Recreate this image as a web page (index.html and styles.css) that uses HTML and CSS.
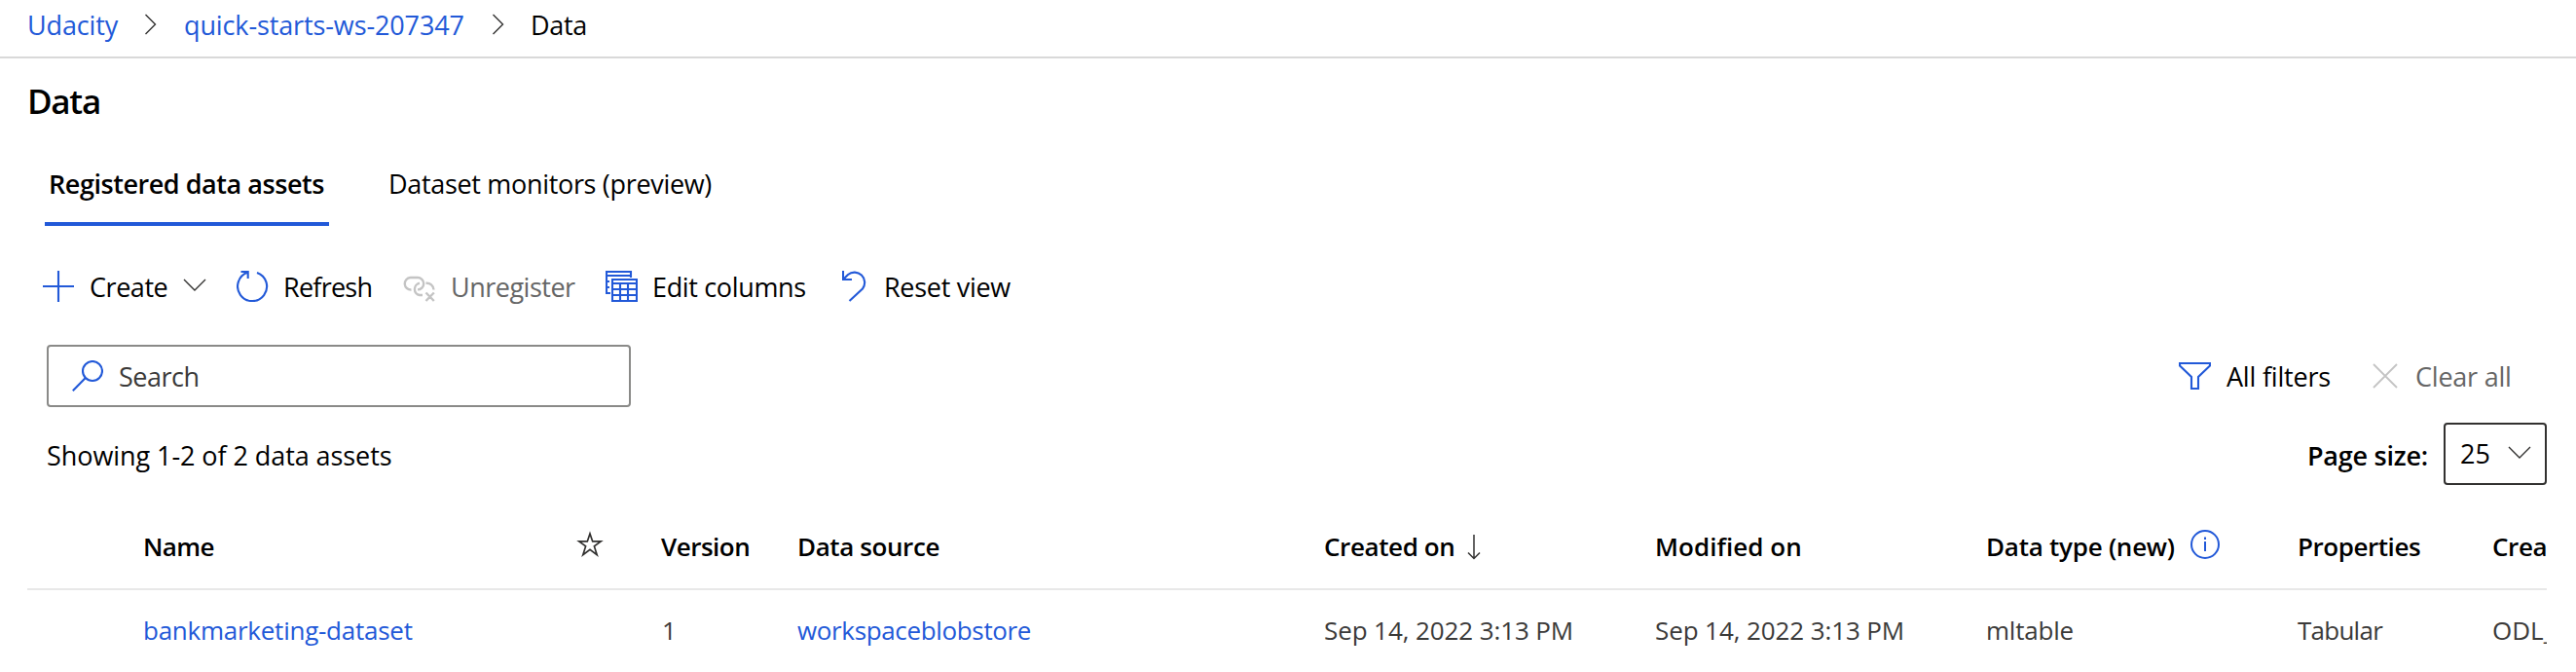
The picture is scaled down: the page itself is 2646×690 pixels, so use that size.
FILE: index.html
```
<!DOCTYPE html>
<html lang="en">
<head>
<meta charset="utf-8">
<title>Data</title>
<link rel="stylesheet" href="styles.css">
</head>
<body>
<nav class="crumbs">
  <a class="link crumb-org">Udacity</a>
  <svg class="crumb-sep" width="14" height="22" viewBox="0 0 14 22"><path d="M1.500 1L11.500 11L1.500 21"/></svg>
  <a class="link crumb-ws">quick-starts-ws-207347</a>
  <svg class="crumb-sep" width="14" height="22" viewBox="0 0 14 22"><path d="M1.500 1L11.500 11L1.500 21"/></svg>
  <span class="crumb-current">Data</span>
</nav>
<h1 class="title">Data</h1>
<div class="tabs">
  <div class="tab tab-active">Registered data assets</div>
  <div class="tab tab-monitors">Dataset monitors (preview)</div>
</div>
<div class="toolbar">
  <div class="cmd cmd-create">
    <svg class="icon blue" width="32" height="32" viewBox="0 0 32 32"><path d="M16 0V32M0 16H32"/></svg>
    <span class="label">Create</span>
    <svg class="chevron" width="24" height="14" viewBox="0 0 24 14"><path d="M1 1L12 12L23 1"/></svg>
  </div>
  <div class="cmd cmd-refresh">
    <svg class="icon blue" width="34" height="32" viewBox="0 0 34 32"><path d="M4.500 1H11.700V8M11.500 1.800A15 15 0 1 0 21 1.900"/></svg>
    <span class="label">Refresh</span>
  </div>
  <div class="cmd cmd-unregister">
    <svg class="icon gray" width="34" height="32" viewBox="0 0 34 32"><path d="M8.500 19.500A6 6 0 0 1 7.500 7H15A6.200 6.200 0 0 1 15 19.400M20 25H17A6.200 6.200 0 0 1 17 12.800M23.500 12.800A7 7 0 0 1 31.500 19.600M23.500 22.500L31.800 31M31.800 22.500L23.500 31"/></svg>
    <span class="label">Unregister</span>
  </div>
  <div class="cmd cmd-columns">
    <svg class="icon blue" width="33" height="32" viewBox="0 0 33 32"><path d="M5 23H1V1H26V7M1 5H26M1 11H4M1 17H4M7 9H32V31H7ZM7 13H32M7 19H32M7 25H32M15 13V31M23 13V31"/></svg>
    <span class="label">Edit columns</span>
  </div>
  <div class="cmd cmd-reset">
    <svg class="icon blue" width="26" height="32" viewBox="0 0 26 32"><path d="M1 0V9H10M1.500 8.500L6 4A10.500 10.500 0 0 1 21 18.500L7.500 31"/></svg>
    <span class="label">Reset view</span>
  </div>
</div>
<div class="filters">
  <div class="search">
    <svg class="icon blue" width="32" height="32" viewBox="0 0 32 32"><circle cx="21" cy="11" r="10"/><path d="M13.800 18L.8 31.200"/></svg>
    <span class="placeholder">Search</span>
  </div>
  <div class="filter-actions">
    <svg class="icon blue" width="33" height="28" viewBox="0 0 33 28"><path d="M1 1H32V3.500L20 15V27H13V15L1 3.500Z"/></svg>
    <span class="all-filters">All filters</span>
    <svg class="icon gray thin" width="26" height="26" viewBox="0 0 26 26"><path d="M1 1L25 25M25 1L1 25"/></svg>
    <span class="clear-all">Clear all</span>
  </div>
</div>
<div class="summary">
  <span class="count">Showing 1-2 of 2 data assets</span>
  <div class="pager">
    <span class="page-label">Page size:</span>
    <div class="select"><span>25</span>
      <svg class="chevron" width="24" height="14" viewBox="0 0 24 14"><path d="M1 1L12 12L23 1"/></svg>
    </div>
  </div>
</div>
<div class="table">
  <div class="row head">
    <span class="h-name">Name</span>
    <span class="h-star"><svg width="28" height="28" viewBox="0 0 28 28"><path d="M14 3L16.700 10.900H25.200L18.400 15.900L21.200 24.800L14 19.400L6.800 24.800L9.600 15.900L2.800 10.900H11.300Z"/></svg></span>
    <span class="h-version">Version</span>
    <span class="h-source">Data source</span>
    <span class="h-created">Created on<svg class="sort" width="14" height="26" viewBox="0 0 14 26"><path d="M7 0V24M1 18.500L7 24.500L13 18.500"/></svg></span>
    <span class="h-modified">Modified on</span>
    <span class="h-type">Data type (new)<svg class="info" width="32" height="32" viewBox="0 0 32 32"><circle cx="16" cy="16" r="14"/><path d="M16 13V23M16 8.500V11"/></svg></span>
    <span class="h-props">Properties</span>
    <span class="h-by">Creat</span>
  </div>
  <div class="row body">
    <a class="link c-name">bankmarketing-dataset</a>
    <span></span>
    <span class="c-version">1</span>
    <a class="link c-source">workspaceblobstore</a>
    <span class="c-date">Sep 14, 2022 3:13 PM</span>
    <span class="c-date">Sep 14, 2022 3:13 PM</span>
    <span class="c-type">mltable</span>
    <span class="c-props">Tabular</span>
    <span class="c-by">ODL_</span>
  </div>
</div>
</body>
</html>
```
FILE: styles.css
```
* { box-sizing: border-box; }
body {
  margin: 0;
  height: 690px;
  overflow: hidden;
  background: #fff;
  color: #000;
  font: 400 27px/40px "Open Sans", "Noto Sans", sans-serif;
  white-space: nowrap;
}
svg { display: block; flex: none; fill: none; stroke: #323130; stroke-width: 1.7; }
.link { color: #2259d8; }
.blue { stroke: #2259d8; stroke-width: 2.1; }
.gray { stroke: #c4c4c4; stroke-width: 2.4; }
.gray.thin { stroke-width: 1.8; }
.chevron, .crumb-sep { stroke-width: 1.4; }

.crumbs { display: flex; height: 60px; padding: 6px 0 0 28px; border-bottom: 2px solid #d9d9d9; }
.crumb-org { width: 120px; letter-spacing: -.15px; }
.crumb-sep { margin-top: 8px; }
.crumb-ws { width: 316px; margin-left: 27px; letter-spacing: -.12px; }
.crumb-current { margin-left: 26px; letter-spacing: -.31px; }

.title { margin: 20px 0 0 28px; font-size: 35px; line-height: 48px; font-weight: 600; letter-spacing: -1.3px; }

.tabs { display: flex; height: 64px; margin: 40px 0 0 46px; }
.tab { padding-top: 1px; }
.tab-active { width: 292px; padding-left: 4px; font-weight: 600; letter-spacing: -.45px; border-bottom: 4px solid #2259d8; }
.tab-monitors { margin-left: 61px; letter-spacing: -.32px; }

.toolbar { display: flex; height: 40px; margin: 42px 0 0 44px; }
.cmd { display: flex; align-items: center; }
.label { padding-top: 1px; }
.cmd-create { width: 199px; letter-spacing: -.45px; }
.cmd-create .label { margin-left: 16px; width: 81px; }
.cmd-create .chevron { margin: -2px 0 0 15px; }
.cmd-refresh { width: 171px; letter-spacing: -.75px; }
.cmd-refresh .label { margin-left: 14px; }
.cmd-unregister { width: 208px; letter-spacing: -.5px; }
.cmd-unregister .label { margin-left: 15px; color: #666; }
.cmd-columns { width: 243px; letter-spacing: -.35px; }
.cmd-columns .label { margin-left: 15px; }
.cmd-reset { letter-spacing: -.3px; }
.cmd-reset .label { margin-left: 17px; }

.filters { display: flex; justify-content: space-between; height: 64px; margin: 40px 67px 0 48px; }
.search { display: flex; align-items: center; width: 600px; padding-left: 24px; border: 2px solid #8a8a88; border-radius: 4px; }
.placeholder { margin-left: 16px; padding-top: 1px; color: #3b3a39; letter-spacing: -.5px; }
.filter-actions { display: flex; align-items: center; }
.all-filters { width: 150px; margin-left: 16px; padding-top: 1px; letter-spacing: -.2px; }
.clear-all { width: 98px; margin-left: 18px; padding-top: 1px; color: #666; letter-spacing: -.22px; }

.summary { display: flex; align-items: center; justify-content: space-between; height: 64px; margin: 16px 30px 0 48px; }
.count { padding-top: 3px; letter-spacing: -.07px; }
.pager { display: flex; align-items: center; }
.page-label { width: 140px; padding-top: 3px; font-weight: 600; letter-spacing: -.25px; }
.select { display: flex; align-items: center; justify-content: space-between; width: 106px; height: 64px; padding: 0 14px 0 15px; border: 2px solid #323130; border-radius: 4px; }
.select .chevron { margin-top: -2px; }

.table { margin: 28px 30px 0 28px; overflow: hidden; font-size: 26px; }
.row { display: grid; grid-template-columns: 445px 87px 140px 541px 340px 340px 320px 200px 56px; padding-left: 119px; }
.head { height: 80px; padding-top: 15px; border-bottom: 2px solid #e8e8e8; font-weight: 600; }
.body { padding-top: 21px; color: #3b3a39; }
.h-star { padding-top: 4px; }
.h-created, .h-type { display: flex; }
.sort { margin: 8px 0 0 13px; stroke-width: 1.5; }
.info { margin: 2px 0 0 15px; stroke: #2259d8; stroke-width: 2; }
.h-name { letter-spacing: -.6px; }
.h-version { letter-spacing: -.5px; }
.h-source { letter-spacing: -.4px; }
.h-created, .h-by { letter-spacing: -.4px; }
.h-modified { letter-spacing: .05px; }
.h-type { letter-spacing: -.25px; }
.h-props { letter-spacing: -.45px; }
.c-name { letter-spacing: -.25px; }
.c-version { padding-left: 1px; }
.c-source { letter-spacing: -.35px; }
.c-date { letter-spacing: -.1px; }
.c-type { letter-spacing: -.2px; }
.c-props { letter-spacing: -.75px; }
```
